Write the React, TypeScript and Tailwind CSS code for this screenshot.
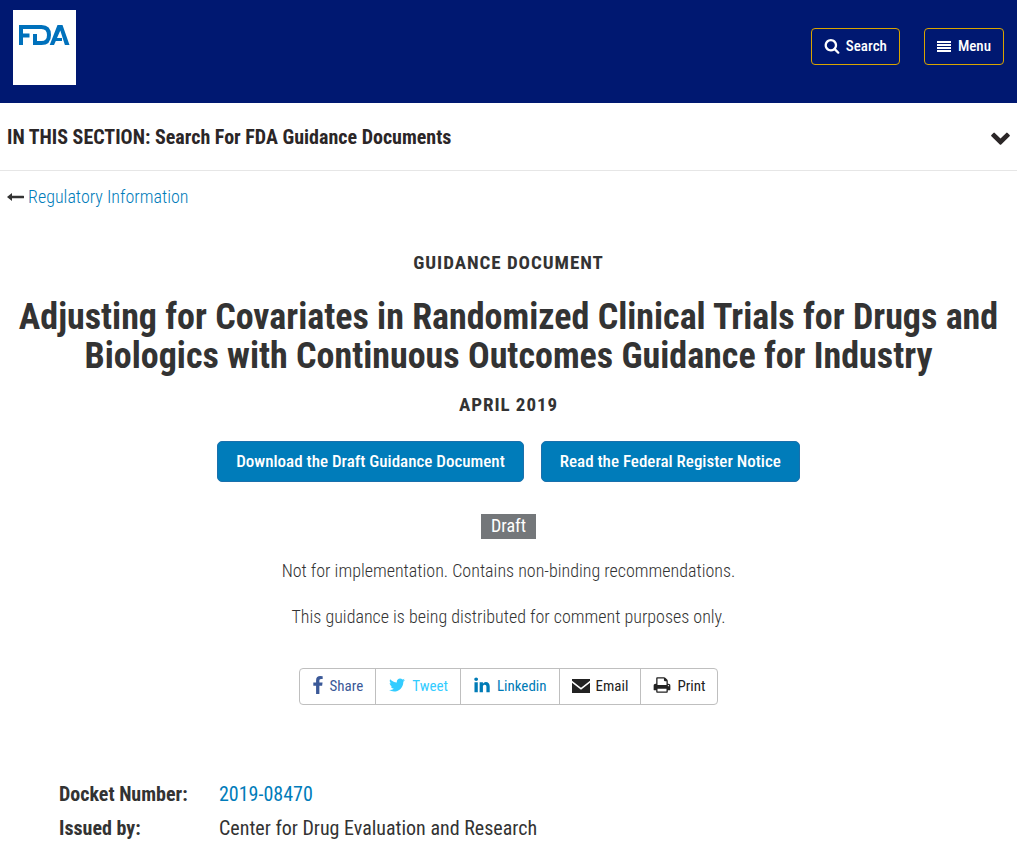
import React from "react";

const faSearch = "M1216 832q0-185-131.5-316.5t-316.5-131.5-316.5 131.5-131.5 316.5 131.5 316.5 316.5 131.5 316.5-131.5 131.5-316.5zm512 832q0 52-38 90t-90 38q-54 0-90-38l-343-342q-179 124-399 124-143 0-273.5-55.5t-225-150-150-225-55.5-273.5 55.5-273.5 150-225 225-150 273.5-55.5 273.5 55.5 225 150 150 225 55.5 273.5q0 220-124 399l343 343q37 37 37 90z";
const faFacebook = "M1343 12v264h-157q-86 0-116 36t-30 108v189h293l-39 296h-254v759h-306v-759h-255v-296h255v-218q0-186 104-288.5t277-102.5q147 0 228 12z";
const faTwitter = "M1684 408q-67 98-162 167 1 14 1 42 0 130-38 259.5t-115.5 248.5-184.5 210.5-258 146-323 54.5q-271 0-496-145 35 4 78 4 225 0 401-138-105-2-188-64.5t-114-159.5q33 5 61 5 43 0 85-11-112-23-185.5-111.5t-73.5-205.5v-4q68 38 146 41-66-44-105-115t-39-154q0-88 44-163 121 149 294.5 238.5t371.5 99.5q-8-38-8-74 0-134 94.5-228.5t228.5-94.5q140 0 236 102 109-21 205-78-37 115-142 178 93-10 186-50z";
const faLinkedin = "M477 625v991h-330v-991h330zm21-306q1 73-50.5 122t-135.5 49h-2q-82 0-132-49t-50-122q0-74 51.5-122.5t134.5-48.5 133 48.5 51 122.5zm1166 729v568h-329v-530q0-105-40.5-164.5t-126.5-59.5q-63 0-105.5 34.5t-63.5 85.5q-11 30-11 81v553h-329q2-399 2-647t-1-296l-1-48h329v144h-2q20-32 41-56t56.5-52 87-43.5 114.5-15.5q171 0 275 113.5t104 332.5z";
const faPrint = "M448 1536h896v-256h-896v256zm0-640h896v-384h-160q-40 0-68-28t-28-68v-160h-640v640zm1152 64q0-26-19-45t-45-19-45 19-19 45 19 45 45 19 45-19 19-45zm128 0v416q0 13-9.5 22.5t-22.5 9.5h-224v160q0 40-28 68t-68 28h-960q-40 0-68-28t-28-68v-160h-224q-13 0-22.5-9.5t-9.5-22.5v-416q0-79 56.5-135.5t135.5-56.5h64v-544q0-40 28-68t68-28h672q40 0 88 20t76 48l152 152q28 28 48 76t20 88v256h64q79 0 135.5 56.5t56.5 135.5z";

function Logo() {
  return (
    <svg viewBox="0 0 63 75" className="h-[75px] w-[63px] bg-white" role="img" aria-label="FDA">
      <g fill="none" stroke="#0071bc" strokeWidth="4">
        <path d="M8 35V17h20.5c5 0 7.5 3 7.5 8s-2.500 8-7.500 8h-6.500V24" />
        <path d="M8 25.500h8.500" />
      </g>
      <path
        fill="#0071bc"
        d="M44.500 15h5l7 20h-4.600L47.300 20.500 44 28H49v3h-6.200L41 35h-4.300z"
      />
    </svg>
  );
}

function Fa({ d, className, viewBox = "0 0 1792 1792" }: { d: string; className: string; viewBox?: string }) {
  return (
    <svg viewBox={viewBox} className={className} fill="currentColor" aria-hidden="true">
      <path d={d} />
    </svg>
  );
}

function BarsIcon() {
  return (
    <svg viewBox="0 0 14 11" className="h-[11px] w-[14px]" fill="currentColor" aria-hidden="true">
      <path d="M0 0h14v2H0zM0 3h14v2H0zM0 6h14v2H0zM0 9h14v2H0z" />
    </svg>
  );
}

function EnvelopeIcon() {
  return (
    <svg viewBox="0 0 18 14" className="h-[14px] w-[18px]" fill="currentColor" aria-hidden="true">
      <path d="M0 0h18v1.800L9 8.800 0 1.800zM0 3.800l9 7 9-7V14H0z" />
    </svg>
  );
}

const headerButton =
  "flex h-[37px] items-center rounded border border-[#d9a400] px-3 text-[15px] font-medium text-white";
const actionButton =
  "flex h-[41px] items-center rounded-[5px] border border-[#1a70ac] bg-[#007cba] px-[18px] text-[17px] font-medium text-white";
const shareItem = "-ml-px flex items-center border border-[#bfbfbf] px-3";
const shareLink = "flex items-center gap-1.5";
const eyebrow = "text-[19px] leading-7 font-bold tracking-wider";

export default function App() {
  return (
    <div className="min-h-screen bg-white font-['Roboto_Condensed','Roboto',sans-serif] text-lg text-[#333]">
      <header className="flex h-[103px] items-start justify-between bg-[#001871] px-[13px] pt-[10px]">
        <a href="#home">
          <Logo />
        </a>
        <div className="mt-[18px] flex gap-6">
          <button className={`${headerButton} gap-1.5`}>
            <Fa d={faSearch} className="h-4 w-4" viewBox="0 128 1792 1792" />
            Search
          </button>
          <button className={`${headerButton} gap-[7px]`}>
            <BarsIcon />
            Menu
          </button>
        </div>
      </header>

      <button className="flex h-[68px] w-full items-center justify-between border-b border-[#e6e6e6] px-[7px] text-left text-xl font-bold text-[#2b2627]">
        <span>IN THIS SECTION: Search For FDA Guidance Documents</span>
        <svg viewBox="0 0 19 13" className="mt-[3px] h-[13px] w-[19px]" fill="currentColor" aria-hidden="true">
          <path d="M.4 4.200Q-.2 3.500.4 2.900L2.400.9Q3.100.3 3.800.9l5.700 5.600L15.200.9q.7-.6 1.400 0l2 2q.6.6 0 1.300l-8.400 8.300q-.7.600-1.400 0z" />
        </svg>
      </button>

      <nav className="flex h-[52px] items-center gap-1 px-[7px]">
        <svg viewBox="0 0 17 8" className="h-2 w-[17px]" fill="currentColor" aria-hidden="true">
          <path d="M0 4l5-4v2.800h11.500q.5 0 .5.500v1.400q0 .5-.5.500H5V8z" />
        </svg>
        <a href="#regulatory" className="font-light text-[#007cba]">Regulatory Information</a>
      </nav>

      <main>
        <div className="flex flex-col items-center pt-[26px] text-center">
          <p className={eyebrow}>GUIDANCE DOCUMENT</p>
          <h1 className="mt-[21px] px-2 text-4xl leading-[39px] font-bold">
            Adjusting for Covariates in Randomized Clinical Trials for Drugs and Biologics with
            Continuous Outcomes Guidance for Industry
          </h1>
          <p className={`${eyebrow} mt-[15px]`}>APRIL 2019</p>
          <div className="mt-[22px] flex gap-[17px]">
            <a href="#download" className={actionButton}>Download the Draft Guidance Document</a>
            <a href="#notice" className={actionButton}>Read the Federal Register Notice</a>
          </div>
          <span className="mt-8 h-[25px] bg-[#74777a] px-[10px] leading-6 text-white">Draft</span>
          <p className="mt-[18px] leading-7 font-light">Not for implementation. Contains non-binding recommendations.</p>
          <p className="mt-[18px] leading-7 font-light">This guidance is being distributed for comment purposes only.</p>
          <ul className="mt-[37px] flex h-[37px] pl-px text-[15px]">
            <li className={`${shareItem} rounded-l`}>
              <a href="#share" className={`${shareLink} text-[#3b5998]`}>
                <Fa d={faFacebook} className="mb-[3px] h-[18px] w-3" viewBox="400 0 1024 1664" />
                Share
              </a>
            </li>
            <li className={shareItem}>
              <a href="#tweet" className={`${shareLink} text-[#33ccff]`}>
                <Fa d={faTwitter} className="mb-[3px] h-[18px] w-[18px]" />
                Tweet
              </a>
            </li>
            <li className={shareItem}>
              <a href="#linkedin" className={`${shareLink} text-[#007bb6]`}>
                <Fa d={faLinkedin} className="mb-[3px] h-[18px] w-[18px]" />
                Linkedin
              </a>
            </li>
            <li className={shareItem}>
              <a href="#email" className={`${shareLink} text-[#222]`}>
                <EnvelopeIcon />
                Email
              </a>
            </li>
            <li className={`${shareItem} rounded-r`}>
              <a href="#print" className={`${shareLink} text-[#222]`}>
                <Fa d={faPrint} className="mb-[3px] h-[18px] w-[18px]" />
                Print
              </a>
            </li>
          </ul>
        </div>

        <dl className="mt-[72px] grid grid-cols-[160px_1fr] px-[59px] text-xl leading-[34px]">
          <dt className="font-bold">Docket Number:</dt>
          <dd><a href="#docket" className="text-[#007cba]">2019-08470</a></dd>
          <dt className="font-bold">Issued by:</dt>
          <dd>Center for Drug Evaluation and Research</dd>
        </dl>
      </main>
    </div>
  );
}
